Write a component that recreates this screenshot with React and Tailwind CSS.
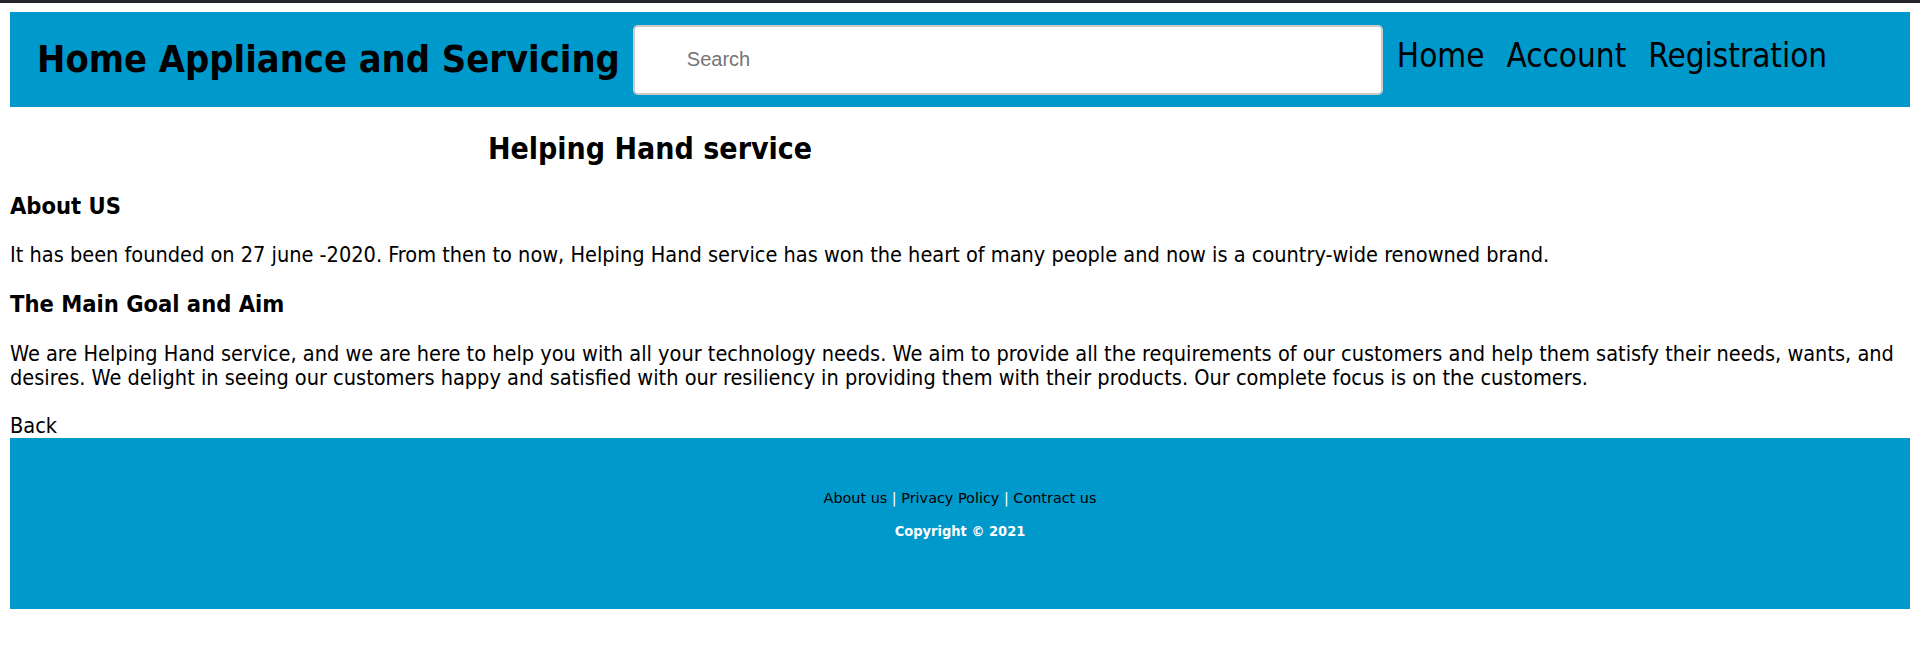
export default function App() {
  return (
    <div className="w-[1920px] h-[661px] bg-white overflow-hidden" style={{ fontFamily: '"DejaVu Sans Condensed", "DejaVu Sans", sans-serif' }}>
      <div className="h-[3px] bg-[#22262c]" />
      <div className="px-[10px] pt-[9px]">
        <header className="h-[95px] bg-[#0099cc] flex items-center">
          <h1 className="ml-[27px] text-[37.7px] font-bold text-black whitespace-nowrap leading-none">Home Appliance and Servicing</h1>
          <input
            className="ml-[13px] shrink-0 w-[750px] h-[70px] bg-white border-2 border-[#cccccc] rounded-[5px] pl-[52px] text-[20px] outline-none placeholder:text-[#757575]"
            style={{ fontFamily: '"Liberation Sans", Arial, sans-serif' }}
            placeholder="Search"
          />
          <nav className="ml-[14px] flex gap-[22px] text-[33px] text-black leading-none -mt-[9px] whitespace-nowrap">
            <a>Home</a>
            <a>Account</a>
            <a>Registration</a>
          </nav>
        </header>
        <main className="text-black">
          <h2 className="w-[1280px] text-center text-[30px] font-bold mt-[24px] leading-[36px]">Helping Hand service</h2>
          <h3 className="text-[23.5px] font-bold mt-[25px] leading-[28px]">About US</h3>
          <p className="text-[21.55px] mt-[22px] leading-[26px]">It has been founded on 27 june -2020. From then to now, Helping Hand service has won the heart of many people and now is a country-wide renowned brand.</p>
          <h3 className="text-[23.5px] font-bold mt-[22px] leading-[28px]">The Main Goal and Aim</h3>
          <p className="text-[21.55px] mt-[24px] leading-[24px]">We are Helping Hand service, and we are here to help you with all your technology needs. We aim to provide all the requirements of our customers and help them satisfy their needs, wants, and desires. We delight in seeing our customers happy and satisfied with our resiliency in providing them with their products. Our complete focus is on the customers.</p>
          <div className="text-[21.55px] mt-[23px] leading-[25px]">Back</div>
        </main>
        <footer className="h-[171px] bg-[#0099cc] flex flex-col items-center pt-[51px]" style={{ fontFamily: '"DejaVu Sans", sans-serif' }}>
          <div className="text-[14.4px] leading-[18px]">
            <a className="text-black">About us</a>
            <span className="text-white"> | </span>
            <a className="text-black">Privacy Policy</a>
            <span className="text-white"> | </span>
            <a className="text-black">Contract us</a>
          </div>
          <div className="text-[14.5px] font-bold text-white mt-[15px] leading-[18px]" style={{ fontFamily: '"DejaVu Sans Condensed", "DejaVu Sans", sans-serif' }}>Copyright © 2021</div>
        </footer>
      </div>
    </div>
  );
}
